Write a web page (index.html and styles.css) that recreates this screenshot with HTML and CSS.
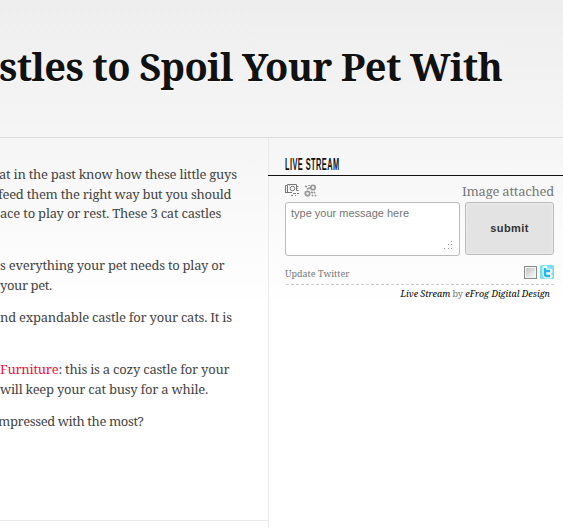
FILE: index.html
```html
<!DOCTYPE html>
<html lang="en">
<head>
<meta charset="utf-8">
<title>Castles to Spoil Your Pet With</title>
<link rel="stylesheet" href="styles.css">
</head>
<body>
<header class="masthead"><h1>stles to Spoil Your Pet With</h1></header>
<div class="columns">
  <main class="article">
    <div class="post">
      <p><span class="cut">at in the past know how these little guys</span><span class="cut-more">feed them the right way but you should</span><span class="loose">ace to play or rest. These 3 cat castles</span></p>
      <p class="gap"><span>s everything your pet needs to play or</span><span class="tight">your pet.</span></p>
      <p><span>nd expandable castle for your cats. It is</span></p>
      <p class="gap"><span class="furniture"><a>Furniture</a>: this is a cozy castle for your</span><span>will keep your cat busy for a while.</span></p>
      <p><span class="cut-more tight">mpressed with the most?</span></p>
    </div>
  </main>
  <aside class="sidebar">
    <h2><span>LIVE STREAM</span></h2>
    <form class="stream">
      <div class="tools">
        <svg class="camera" width="15" height="14" viewBox="0 0 15 14" fill="none" stroke="#777"><path d="M.5 9.500v-7h2v-1h2v1M2.500 2.500v7M0 9.500h7M4.500 1.500h7v6M11.500 3.500h2M11.500 7.500h2M11.500 5.500h1M8 10.500h3M6 12.500h2M10 12.500h1M12 10.500h2"/><circle cx="7.500" cy="5.500" r="2.300"/></svg>
        <svg class="link" width="13" height="13" viewBox="0 0 13 13" fill="none" stroke="#999" stroke-width="1.800"><circle cx="9" cy="3.500" r="2.200"/><circle cx="3.500" cy="9.500" r="2.200"/><path d="M1 2l2 1M3 5l3-1M5 1v1M7 8l2 1M11 8l-1 1M8 12l1-1M11 11l1 1"/></svg>
        <span class="attached">Image attached</span>
      </div>
      <div class="compose">
        <textarea placeholder="type your message here"></textarea>
        <svg class="grip" width="9" height="9" viewBox="0 0 9 9" fill="#999"><path d="M7 0h1v1H7zM4 3h1v1H4zM7 3h1v1H7zM0 7h1v1H0zM4 7h1v1H4zM7 7h1v1H7z"/></svg>
        <button type="button">submit</button>
      </div>
      <div class="update"><span class="label">Update Twitter</span><i class="check"></i>
        <svg width="14" height="14" viewBox="0 0 14 14"><rect width="14" height="14" rx="1.500" fill="#7bdcf7"/><path d="M5 3v6q0 2 2 2h3M5 6h5" fill="none" stroke="#effbff" stroke-width="5" stroke-linecap="round"/><path d="M5 3v6q0 2 2 2h3M5 6h5" fill="none" stroke="#23b8ea" stroke-width="2.400"/></svg>
      </div>
      <div class="credit"><em>Live Stream</em> by <em>eFrog Digital Design</em></div>
    </form>
  </aside>
</div>
</body>
</html>
```
FILE: styles.css
```css
* { box-sizing: border-box; }
body { margin: 0; width: 563px; height: 528px; overflow: hidden; font-family: "Droid Serif", "Noto Serif", "DejaVu Serif Condensed", "DejaVu Serif", serif; color: #444; background: linear-gradient(#eee 0, #f0f0f0 40px, #f6f6f6 150px, #fff 310px) #fff; }
.masthead { height: 138px; border-bottom: 1px solid #ddd; padding-top: 40px; }
h1 { margin: 0 0 0 -1px; font-size: 38px; line-height: 52px; font-weight: bold; letter-spacing: -.6px; color: #111; white-space: nowrap; text-shadow: 0 1px 0 #fff; }
.columns { display: flex; height: 390px; }
.article { width: 269px; border-right: 1px solid #eaeaea; overflow: hidden; }
.post { height: 383px; padding-top: 27px; border-bottom: 1px solid #eaeaea; }
.article p { margin: 0 0 13px; font-size: 13px; line-height: 19.500px; letter-spacing: -.25px; }
.article .gap { margin-top: 32.500px; }
.article span { display: block; white-space: nowrap; }
.article .cut { margin-left: -1px; }
.article .cut-more { margin-left: -2px; letter-spacing: -.28px; }
.article .loose { letter-spacing: -.2px; }
.article .tight { letter-spacing: -.4px; }
.article .furniture { letter-spacing: -.23px; }
.article a { color: #f00f3c; }
.sidebar { flex: 1; margin-left: -1px; }
h2 { margin: 0; height: 38px; border-bottom: 1px solid #111; padding: 16px 0 0 17px; font: bold 16px/21px "Liberation Sans", sans-serif; color: #111; }
h2 span { display: inline-block; transform: scaleX(.46); transform-origin: left; white-space: nowrap; letter-spacing: 1px; }
.stream { padding: 7px 9px 0 17px; }
.tools { display: flex; height: 19px; }
.tools .link { margin: 1px 0 0 4px; }
.attached { margin-left: auto; font-size: 13px; line-height: 17px; letter-spacing: -.22px; color: #777; }
.compose { display: flex; position: relative; gap: 5px; }
textarea { width: 175px; height: 54px; border: 1px solid #bbb; border-radius: 3px; resize: none; padding: 3px 5px; font: 11px/14px "Liberation Sans", sans-serif; background: #fff; }
.grip { position: absolute; left: 159px; top: 39px; }
button { width: 89px; height: 53px; border: 1px solid #bbb; border-radius: 3px; padding: 0 6px 2px 6px; background: #e3e3e3; box-shadow: inset 0 0 2px 1px #ececec; font: bold 11px "Liberation Sans", sans-serif; letter-spacing: .4px; color: #333; }
.update { display: flex; height: 29px; margin-left: 1px; padding-top: 9px; border-bottom: 1px dashed #ccc; }
.label { margin: 0 auto 0 -1px; font-size: 9px; line-height: 17px; color: #777; }
.check { width: 13px; height: 13px; margin: 1px 3px 0 0; border: 1px solid #888; background: linear-gradient(135deg, #bbb, #fff); box-shadow: inset 0 0 0 1px #f4f4f4; }
.credit { text-align: right; padding-right: 4px; font-size: 9px; line-height: 18px; letter-spacing: -.02px; color: #777; }
.credit em { color: #000; }
```
